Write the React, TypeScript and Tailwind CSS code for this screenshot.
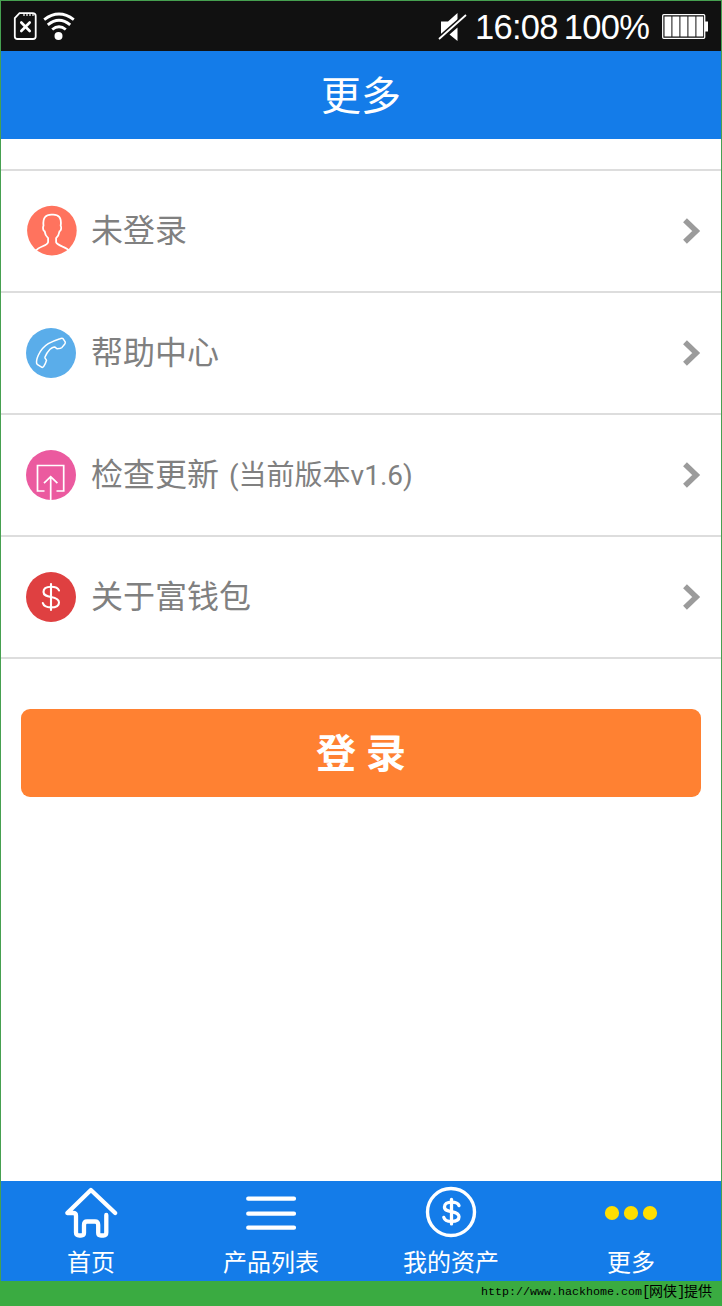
import type { ReactNode } from "react";

const sans = "font-['Roboto','Noto_Sans_CJK_SC',sans-serif]";

function Dollar({ width }: { width: number }) {
  return (
    <g fill="none" stroke="#fff" strokeWidth={width} strokeLinecap="round" strokeLinejoin="round">
      <path d="M25 12V38" />
      <path d="M33 18.5C32 15.8 29 14.8 25 14.8C20.5 14.8 17.5 16.8 17.5 20C17.5 23.5 21 24.2 25 25C29.5 25.9 33 27 33 30.4C33 33.8 29.5 35.4 25 35.4C20.6 35.4 17.6 33.8 16.8 31" />
    </g>
  );
}

function Disc({ color, children }: { color: string; children: ReactNode }) {
  return (
    <svg width="50" height="50" viewBox="0 0 50 50" overflow="visible" className="shrink-0">
      <circle cx="25" cy="25" r="25" fill={color} />
      {children}
    </svg>
  );
}

const rows = [
  {
    label: "未登录",
    note: "",
    icon: (
      <svg width="50" height="50" viewBox="0 0 50 50" overflow="visible" className="shrink-0">
        <g transform="translate(.9 -.4)">
          <circle cx="25" cy="25" r="24.8" fill="#ff735e" />
          <path
            d="M9.2 45C12 40.5 20.5 40.5 21.2 36.5V32.5C19 30.5 18 28.5 17.8 25.8C16.2 25.5 15.6 21.5 16.6 20.2C15.6 12 19 8.7 25.2 9C31.5 8.5 35 12 33.8 20.2C34.8 21.5 34.2 25.5 32.6 25.8C32.2 28.5 31.4 30.5 29.2 32.5V36.5C30.5 40.5 39 41 41.6 44.5"
            fill="none" stroke="#fff" strokeWidth="1.8"
          />
        </g>
      </svg>
    ),
  },
  {
    label: "帮助中心",
    note: "",
    icon: (
      <Disc color="#5aadea">
        <path
          d="M10.7 35.7C10.2 33.5 11 30.2 12.3 27.3C14.5 22.5 18 18.3 22.3 15.7C26.5 13.3 30.5 11.8 34 10.7C35.2 10.2 36.2 9.8 37 10.6L39.2 13.9C39.6 14.8 39.2 15.4 38.6 16.2L36 19.4C35 20.5 33.5 20.6 31.2 20.7C30 20.6 30 19.2 28.3 19C26.5 19.2 25.2 20.2 24 21.3C21.8 23.6 20 26.5 18.9 29.2C18.6 30.6 20.4 31 20.5 32.3C19.9 34.5 19 36.8 17.6 38.6C16.9 39.5 16 39.5 15.2 38.9L12 36.9Z"
          fill="none" stroke="#fff" strokeWidth="1.5" strokeLinejoin="round"
        />
      </Disc>
    ),
  },
  {
    label: "检查更新",
    note: "(当前版本v1.6)",
    icon: (
      <Disc color="#eb5a9f">
        <path d="M18.5 41H11.5V15.5H37.7V41H30.5M24.7 50V27M18 33.2L24.7 26.6L31.4 33.2" fill="none" stroke="#fff" strokeWidth="1.7" />
      </Disc>
    ),
  },
  {
    label: "关于富钱包",
    note: "",
    icon: (
      <Disc color="#df4041">
        <Dollar width={2.1} />
      </Disc>
    ),
  },
];

const tabs = [
  {
    label: "首页",
    icon: (
      <path
        d="M45.3 27V44.5Q45.3 47.5 42.5 47.5H40Q37.2 47.5 37.2 45V37Q37.2 33.5 34 33.5H26Q23 33.5 23 37V45Q23 47.5 20 47.5H18.5Q15 47.5 15 44.5V27.5Q15 25 12 25H6.3L29.9 2L54.2 25"
        fill="none" stroke="#fff" strokeWidth="4.3" strokeLinecap="round" strokeLinejoin="round"
      />
    ),
  },
  {
    label: "产品列表",
    icon: <path d="M7.2 10.7H53M7.2 25.7H53M7.2 39.7H53" stroke="#fff" strokeWidth="4.2" strokeLinecap="round" />,
  },
  {
    label: "我的资产",
    icon: (
      <>
        <circle cx="30" cy="24" r="23.5" fill="none" stroke="#fff" strokeWidth="3.4" />
        <g transform="translate(7 .2) scale(.94)">
          <Dollar width={3.5} />
        </g>
      </>
    ),
  },
  {
    label: "更多",
    icon: (
      <g fill="#ffde00">
        <circle cx="11" cy="25" r="7.1" />
        <circle cx="30" cy="25" r="7.1" />
        <circle cx="49" cy="25" r="7.1" />
      </g>
    ),
  },
];

function StatusBar() {
  return (
    <div className="flex h-[50px] items-center bg-[#111111] pl-[12px] pr-[13px] text-white">
      <svg width="24" height="29" viewBox="0 0 24 29" fill="none" stroke="#fff" className="mt-[1px]">
        <path d="M6.5 1.2H19.5Q22.7 1.2 22.7 4V24.5Q22.7 27 20 27H4.5Q1.8 27 1.8 24.5V6Z" strokeWidth="1.8" />
        <path d="M11 2V4M14 2V4M17 2V4M20 2V4" strokeWidth="1.2" />
        <path d="M8.3 10.5L16.7 19M16.7 10.5L8.3 19" strokeWidth="2.6" strokeLinecap="round" />
      </svg>
      <svg width="32" height="29" viewBox="0 0 32 29" fill="none" stroke="#fff" strokeWidth="2.9" className="ml-[6px]">
        <path d="M1.2 7.6Q16 -3.4 30.8 7.6" />
        <path d="M4.8 12.8Q16 3.6 27.2 12.8" />
        <path d="M9.2 17.5Q16 11.8 22.8 17.5" />
        <circle cx="15.5" cy="24" r="4" fill="#fff" stroke="none" />
      </svg>
      <div className="ml-auto flex items-center">
        <svg width="29" height="28" viewBox="0 0 29 28" className="mr-[8px] mt-[1px]">
          <path d="M3 8.5H10L19.5 0V10L5 22.5H3ZM19.5 14.5V28L11.5 21.5Z" fill="#fff" />
          <path d="M1 26L28 2" stroke="#111" strokeWidth="5" />
          <path d="M1 26L28 2" stroke="#fff" strokeWidth="1.8" />
        </svg>
        <div className="flex w-[179px] whitespace-nowrap pt-[1px] font-['Liberation_Sans',sans-serif] text-[34.5px] leading-[40px] tracking-[-0.7px]">
          <span>16:08</span>
          <span className="ml-[6px]">100%</span>
        </div>
        <svg width="46" height="25" viewBox="0 0 46 25" className="ml-[8px] mt-[1px]">
          <rect x=".7" y=".7" width="42" height="23.6" rx="1" fill="none" stroke="#fff" strokeWidth="1.3" />
          <path d="M2.5 2.5H9.4V22.5H2.5ZM10.4 2.5H17.4V22.5H10.4ZM18.4 2.5H25.4V22.5H18.4ZM26.4 2.5H33.4V22.5H26.4ZM34.4 2.5H41.2V22.5H34.4ZM43 7.5H46V17.5H43Z" fill="#fff" />
        </svg>
      </div>
    </div>
  );
}

export default function App() {
  return (
    <div className={`flex h-[1306px] w-[722px] flex-col bg-[#3aab41] ${sans}`}>
      <div className="flex h-[1281px] flex-col border-x border-t border-[#46a050] bg-white">
        <StatusBar />
        <header className="flex h-[88px] items-center justify-center bg-[#147ce9] pt-[3px] text-[40px] leading-[58px] text-white">更多</header>

        <main className="flex grow flex-col">
          <ul className="mt-[30px] border-t-2 border-[#dddddd]">
            {rows.map((row) => (
              <li key={row.label} className="flex h-[122px] items-center border-b-2 border-[#dddddd] pl-[25px] pr-[20px] text-[#808080]">
                {row.icon}
                <span className="ml-[15px] text-[32px] leading-[48px]">{row.label}</span>
                {row.note && <span className="ml-[10px] pt-[2px] text-[28px] leading-[42px]">{row.note}</span>}
                <svg width="19" height="27" viewBox="0 0 19 27" className="ml-auto">
                  <path d="M3 2.2L14.2 13L3 23.8" fill="none" stroke="#9b9b9b" strokeWidth="5.5" />
                </svg>
              </li>
            ))}
          </ul>
          <button className="mx-[20px] mt-[50px] h-[88px] rounded-[9px] bg-[#ff8132] pt-[3px] text-[40px] font-bold leading-[58px] text-white">登 录</button>
        </main>

        <nav className="grid h-[100px] grid-cols-4 bg-[#147ce9] text-white">
          {tabs.map((tab) => (
            <div key={tab.label} className="flex flex-col items-center pt-[7px]">
              <svg width="60" height="50" viewBox="0 0 60 50" overflow="visible">
                {tab.icon}
              </svg>
              <span className="mt-[7px] text-[24px] leading-[36px]">{tab.label}</span>
            </div>
          ))}
        </nav>
      </div>
      <footer className="flex h-[25px] items-center justify-end whitespace-pre pb-[3px] pr-[10px] font-['Liberation_Mono','Noto_Sans_CJK_SC',monospace] text-[11.67px] leading-[20px] text-black">
        http://www.hackhome.com<span className="inline-block w-[7px] text-[14px]">[</span><span className="text-[14px]">网侠</span><span className="inline-block w-[7px] text-[14px]">]</span><span className="text-[14px]">提供</span>
      </footer>
    </div>
  );
}
